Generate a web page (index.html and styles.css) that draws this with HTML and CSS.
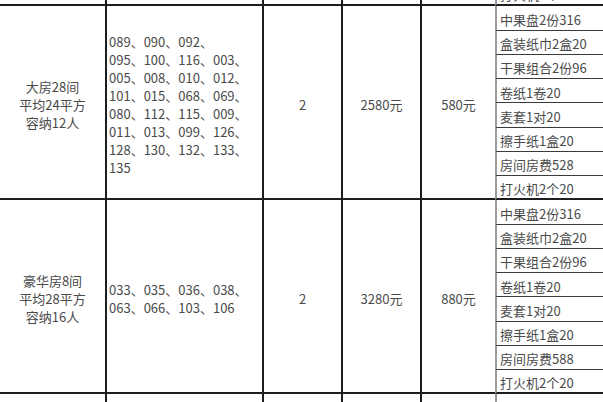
FILE: index.html
```html
<!DOCTYPE html>
<html lang="zh">
<head>
<meta charset="utf-8">
<link rel="stylesheet" href="styles.css">
</head>
<body>
<div class="viewport">
  <div class="sheet">
    <!-- tail of previous block -->
    <div class="cell main prev"></div>
    <div class="cell main prev"></div>
    <div class="cell main prev"></div>
    <div class="cell main prev"></div>
    <div class="cell main prev last-main"></div>
    <div class="item prev-item end">打火机2个20</div>

    <!-- block 1 -->
    <div class="cell main type">大房28间<br>平均24平方<br>容纳12人</div>
    <div class="cell main rooms">089、090、092、<br>095、100、116、003、<br>005、008、010、012、<br>101、015、068、069、<br>080、112、115、009、<br>011、013、099、126、<br>128、130、132、133、<br>135</div>
    <div class="cell main center">2</div>
    <div class="cell main center">2580元</div>
    <div class="cell main center last-main">580元</div>
    <div class="item">中果盘2份316</div>
    <div class="item">盒装纸巾2盒20</div>
    <div class="item">干果组合2份96</div>
    <div class="item">卷纸1卷20</div>
    <div class="item">麦套1对20</div>
    <div class="item">擦手纸1盒20</div>
    <div class="item">房间房费528</div>
    <div class="item end">打火机2个20</div>

    <!-- block 2 -->
    <div class="cell main type">豪华房8间<br>平均28平方<br>容纳16人</div>
    <div class="cell main rooms">033、035、036、038、<br>063、066、103、106</div>
    <div class="cell main center">2</div>
    <div class="cell main center">3280元</div>
    <div class="cell main center last-main">880元</div>
    <div class="item">中果盘2份316</div>
    <div class="item">盒装纸巾2盒20</div>
    <div class="item">干果组合2份96</div>
    <div class="item">卷纸1卷20</div>
    <div class="item">麦套1对20</div>
    <div class="item">擦手纸1盒20</div>
    <div class="item">房间房费588</div>
    <div class="item end">打火机2个20</div>

    <!-- start of next block -->
    <div class="cell main next"></div>
    <div class="cell main next"></div>
    <div class="cell main next"></div>
    <div class="cell main next"></div>
    <div class="cell main next last-main"></div>
    <div class="item next-item"></div>
  </div>
</div>
</body>
</html>
```
FILE: styles.css
```css
html, body {
  margin: 0;
  padding: 0;
  background: #ffffff;
}
.viewport {
  width: 603px;
  height: 402px;
  overflow: hidden;
}
.sheet {
  display: grid;
  grid-template-columns: 107px 157px 79px 79px 73px 112px;
  grid-auto-rows: 24.25px;
  margin-top: -18px;
  font-family: "Noto Sans CJK SC", "Microsoft YaHei", sans-serif;
  font-size: 13px;
  color: #4a4a4a;
}
.cell {
  box-sizing: border-box;
  border-right: 2px solid #1e1e1e;
  border-bottom: 2px solid #1e1e1e;
  display: flex;
  align-items: center;
  line-height: 18px;
  padding-top: 5px;
}
.main {
  grid-row: span 8;
}
.prev, .next {
  grid-row: span 1;
  padding-top: 0;
}
.last-main {
  border-right: none;
}
.type {
  justify-content: center;
  text-align: center;
}
.rooms {
  padding-left: 2px;
  white-space: nowrap;
}
.center {
  justify-content: center;
}
.item {
  box-sizing: border-box;
  border-left: 2px solid #9c9c9c;
  border-bottom: 1px solid #3a3a3a;
  padding-left: 3px;
  display: flex;
  align-items: center;
  white-space: nowrap;
  padding-top: 3px;
}
.item.end {
  border-bottom: 2px solid #1e1e1e;
}
.next-item {
  border-bottom: none;
}
```
